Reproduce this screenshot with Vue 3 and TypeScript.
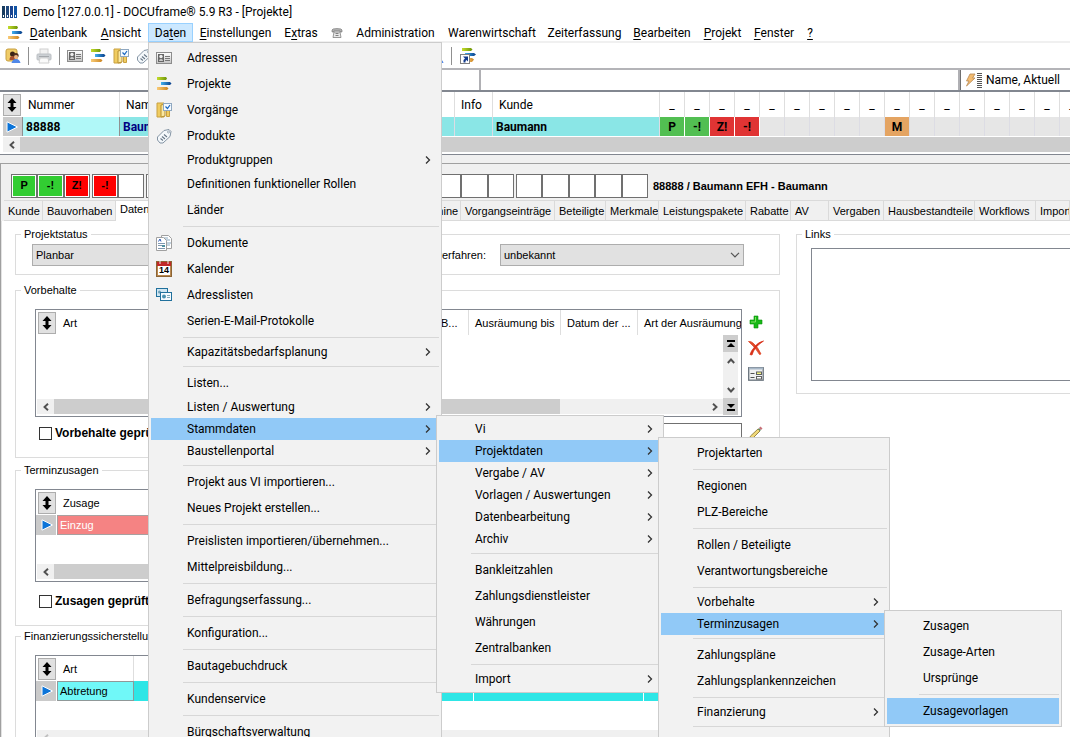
<script setup lang="ts">
import { ref } from 'vue'

interface Entry {
  label?: string
  icon?: string
  sub?: boolean
  open?: boolean
  sep?: boolean
}

const sep: Entry = { sep: true }

const menus: { name: string; items: Entry[] }[] = [
  {
    name: 'daten',
    items: [
      { label: 'Adressen', icon: 'card' },
      { label: 'Projekte', icon: 'bars' },
      { label: 'Vorgänge', icon: 'folder' },
      { label: 'Produkte', icon: 'tag' },
      { label: 'Produktgruppen', sub: true },
      { label: 'Definitionen funktioneller Rollen' },
      { label: 'Länder' },
      sep,
      { label: 'Dokumente', icon: 'docs' },
      { label: 'Kalender', icon: 'calendar' },
      { label: 'Adresslisten', icon: 'cards' },
      { label: 'Serien-E-Mail-Protokolle' },
      sep,
      { label: 'Kapazitätsbedarfsplanung', sub: true },
      sep,
      { label: 'Listen...' },
      { label: 'Listen / Auswertung', sub: true },
      { label: 'Stammdaten', sub: true, open: true },
      { label: 'Baustellenportal', sub: true },
      sep,
      { label: 'Projekt aus VI importieren...' },
      { label: 'Neues Projekt erstellen...' },
      sep,
      { label: 'Preislisten importieren/übernehmen...' },
      { label: 'Mittelpreisbildung...' },
      sep,
      { label: 'Befragungserfassung...' },
      sep,
      { label: 'Konfiguration...' },
      sep,
      { label: 'Bautagebuchdruck' },
      sep,
      { label: 'Kundenservice' },
      sep,
      { label: 'Bürgschaftsverwaltung' },
    ],
  },
  {
    name: 'stammdaten',
    items: [
      { label: 'Vi', sub: true },
      { label: 'Projektdaten', sub: true, open: true },
      { label: 'Vergabe / AV', sub: true },
      { label: 'Vorlagen / Auswertungen', sub: true },
      { label: 'Datenbearbeitung', sub: true },
      { label: 'Archiv', sub: true },
      sep,
      { label: 'Bankleitzahlen' },
      { label: 'Zahlungsdienstleister' },
      { label: 'Währungen' },
      { label: 'Zentralbanken' },
      sep,
      { label: 'Import', sub: true },
    ],
  },
  {
    name: 'projektdaten',
    items: [
      { label: 'Projektarten' },
      sep,
      { label: 'Regionen' },
      { label: 'PLZ-Bereiche' },
      sep,
      { label: 'Rollen / Beteiligte' },
      { label: 'Verantwortungsbereiche' },
      sep,
      { label: 'Vorbehalte', sub: true },
      { label: 'Terminzusagen', sub: true, open: true },
      sep,
      { label: 'Zahlungspläne' },
      { label: 'Zahlungsplankennzeichen' },
      sep,
      { label: 'Finanzierung', sub: true },
      sep,
    ],
  },
  {
    name: 'terminzusagen',
    items: [
      { label: 'Zusagen' },
      { label: 'Zusage-Arten' },
      { label: 'Ursprünge' },
      sep,
      { label: 'Zusagevorlagen', open: true },
    ],
  },
]

// [before, accelerator, after]
const menubar: [string, string, string][] = [
  ['', 'D', 'atenbank'],
  ['', 'A', 'nsicht'],
  ['Da', 't', 'en'],
  ['', 'E', 'instellungen'],
  ['E', 'x', 'tras'],
  ['', '', ''],
  ['Administration', '', ''],
  ['Warenwirtschaft', '', ''],
  ['Zeiterfassung', '', ''],
  ['', 'B', 'earbeiten'],
  ['', 'P', 'rojekt'],
  ['', 'F', 'enster'],
  ['', '?', ''],
]

const flags: { text?: string; tone?: string }[] = [
  { text: 'P', tone: 'green' },
  { text: '-!', tone: 'green' },
  { text: 'Z!', tone: 'red' },
  { text: '-!', tone: 'red' },
  {}, {}, {}, {}, {},
  { text: 'M', tone: 'orange' },
  {}, {}, {}, {}, {}, {}, {},
]

const statusGroups: { size: string; boxes: { text?: string; tone?: string }[] }[] = [
  { size: 'g3', boxes: [{ text: 'P', tone: 'lime' }, { text: '-!', tone: 'lime' }, { text: 'Z!', tone: 'pure' }] },
  { size: 'g2', boxes: [{ text: '-!', tone: 'pure' }, {}] },
  { size: 'g14', boxes: Array.from({ length: 14 }, () => ({})) },
  { size: 'g5', boxes: Array.from({ length: 5 }, () => ({})) },
]

const tabs = ['Kunde', 'Bauvorhaben', 'Daten', 'Termine', 'Vorgangseinträge', 'Beteiligte', 'Merkmale', 'Leistungspakete', 'Rabatte', 'AV', 'Vergaben', 'Hausbestandteile', 'Workflows', 'Import']

const status = ref('Planbar')
const procedure = ref('unbekannt')
</script>

<template>
  <div class="app">
    <svg class="defs" aria-hidden="true">
      <defs>
        <linearGradient id="g-green" x1="0" x2="1"><stop offset="0" stop-color="#c4dc2c" /><stop offset="1" stop-color="#6c9408" /></linearGradient>
        <linearGradient id="g-blue" x1="0" x2="1"><stop offset="0" stop-color="#40b0f0" /><stop offset="1" stop-color="#083c88" /></linearGradient>
        <linearGradient id="g-orange" x1="0" x2="1"><stop offset="0" stop-color="#f8cc78" /><stop offset="1" stop-color="#cc8420" /></linearGradient>
        <linearGradient id="g-gray" x1="0" y1="0" x2="0" y2="1"><stop offset="0" stop-color="#ffffff" /><stop offset="1" stop-color="#c4c4c4" /></linearGradient>
      </defs>
      <symbol id="i-bars" viewBox="0 0 16 16">
        <path d="M1 1h9l1 1.500-1 1.500H1z" fill="url(#g-green)" />
        <path d="M5 6h9l1.500 1.500L14 9H5z" fill="url(#g-blue)" />
        <path d="M1 11h10l1.500 1.500L11 14H1z" fill="url(#g-orange)" />
      </symbol>
      <symbol id="i-card" viewBox="0 0 16 16">
        <rect x=".5" y="2.500" width="15" height="11" fill="url(#g-gray)" stroke="#8c8c8c" />
        <rect x="2" y="4" width="6" height="8" fill="#666" />
        <circle cx="5" cy="6.500" r="1.700" fill="#eee" /><path d="M3 11q0-2 2-2t2 2z" fill="#ccc" />
        <path d="M9 6.500h5M9 8.500h5M9 10.500h5" stroke="#777" />
      </symbol>
      <symbol id="i-folder" viewBox="0 0 16 16">
        <path d="M1 1h7v14H1z" fill="#f0cc60" stroke="#c8a040" />
        <path d="M5 3l4-1v12l-4 1z" fill="#fbe8a0" stroke="#b89030" />
        <path d="M10.500 8v6.500h3V8z" fill="#f0cc60" stroke="#c8a040" />
        <rect x="7.500" y="1.500" width="8" height="7" fill="#f4faff" stroke="#90a8c0" />
        <path d="M9.500 4.500l2 2 2.500-3.500" fill="none" stroke="#1c68c0" stroke-width="1.200" />
      </symbol>
      <symbol id="i-tag" viewBox="0 0 16 16">
        <path d="M1.500 9L8 2.500l5-1 2 2-1 5L7 15H4l-2.500-3z" fill="#f4f8fb" stroke="#8494a4" />
        <circle cx="12.500" cy="4" r="1" fill="#fff" stroke="#8494a4" stroke-width=".8" />
        <path d="M4.500 10.500l2.500 2M6 8.500l3 2.500M8 6.500l3 2.500" stroke="#667686" stroke-width="1.100" />
      </symbol>
      <symbol id="i-docs" viewBox="0 0 16 16">
        <path d="M5.500.5h7l3 3v10h-10z" fill="#fff" stroke="#a0a0a0" />
        <path d="M8 3h4M8 5h6M11 8h4M11 10h3" stroke="#88a8c0" />
        <path d="M.5 2.500h7l3 3v10H.5z" fill="#fff" stroke="#a0a0a0" />
        <path d="M2.500 6.500L4 4l1 2.500" stroke="#2858b8" fill="none" />
        <path d="M2 8.500h7M2 10.500h4M2 13.500h7" stroke="#8098b0" /><path d="M6 10h3v2H6z" fill="#5090a0" />
      </symbol>
      <symbol id="i-calendar" viewBox="0 0 16 16">
        <rect x=".5" y=".5" width="15" height="15" fill="#b88850" stroke="#8c6434" />
        <rect x="2" y="4" width="12" height="10" fill="#fff" />
        <rect x="1" y="1" width="14" height="4" fill="#c02828" />
        <path d="M4 0v3M12 0v3" stroke="#eee" />
      </symbol>
      <symbol id="i-cards" viewBox="0 0 16 16">
        <rect x=".5" y="1.500" width="11" height="8" fill="#cfe6f2" stroke="#20709c" />
        <circle cx="3.500" cy="5" r="1.500" fill="#70a0b8" />
        <rect x="4.500" y="5.500" width="11" height="8" fill="#f4faff" stroke="#20709c" />
        <circle cx="8" cy="9.500" r="2" fill="#4890b0" /><path d="M11 8.500h3M11 10.500h3" stroke="#80a8b8" />
      </symbol>
      <symbol id="i-users" viewBox="0 0 16 16">
        <rect x="1" y="1" width="11" height="12" rx="2" fill="#f0cc68" stroke="#c8a040" />
        <circle cx="7.500" cy="6" r="2.500" fill="#3c2418" /><path d="M4.500 12q0-4 3-4t3 4z" fill="#a85030" />
        <circle cx="11" cy="7.500" r="2.600" fill="#503020" /><circle cx="11" cy="9" r="2" fill="#f0b888" />
        <path d="M6.500 15q1-4 4.500-4t4.500 4z" fill="#5088e8" />
      </symbol>
      <symbol id="i-printer" viewBox="0 0 16 16">
        <rect x="4" y="1" width="8" height="6" fill="#f2f2f2" stroke="#d0d0d0" />
        <rect x="1" y="6" width="14" height="6" rx="1" fill="#ccd0d4" stroke="#bcc0c4" />
        <path d="M3 8.500h10" stroke="#a4a8ac" />
        <path d="M4 10h8l1 5H3z" fill="#fafafa" stroke="#d0d0d0" />
      </symbol>
      <symbol id="i-shortcut" viewBox="0 0 18 18">
        <path d="M3 1h9l1.500 1.500L12 4H3z" fill="url(#g-green)" />
        <path d="M6 6h9l2 1.500L15 9H6z" fill="url(#g-blue)" />
        <path d="M7 11h6l2 1.500-2 2.500H7z" fill="url(#g-orange)" />
        <rect x="1.500" y="7.500" width="9" height="9" fill="#fff" stroke="#808080" />
        <path d="M4 9.500h5v5L7.500 13l-1 1v1.500H4.500V13L6 11.500z" fill="#143c8c" />
      </symbol>
      <symbol id="i-phone" viewBox="0 0 12 12">
        <path d="M1 5V3q0-1.500 5-1.500T11 3v2H9V4H3v1z" fill="#b0b0b0" stroke="#707070" stroke-width=".6" />
        <path d="M3 5h6l1 5.500H2z" fill="#e8e8e8" stroke="#808080" stroke-width=".8" />
        <path d="M4.500 6.500h3M4.500 8.500h3" stroke="#808080" />
      </symbol>
      <symbol id="i-logo" viewBox="0 0 16 12">
        <path d="M0 0h3v12H0z" fill="#183c60" /><path d="M4 0h3v12H4z" fill="#20487c" /><path d="M8 0h3v12H8z" fill="#184490" /><path d="M12 0h3v12h-3z" fill="#1054a4" />
        <path d="M1 9h1v2H1zM5 9h1v2H5zM9 9h1v2H9zM13 9h1v2h-1z" fill="#fff" />
      </symbol>
      <symbol id="i-flash" viewBox="0 0 18 16">
        <path d="M5 2h5L7.500 6H10L1.500 14l2.500-5H1.500z" fill="#f4bc70" stroke="#b88850" stroke-width=".8" />
        <path d="M12 1.500h5M12 3.500h5M12 5.500h5M12 7.500h5M12 9.500h5M12 11.500h5M12 13.500h5M12 15.500h5" stroke="#555" />
      </symbol>
      <symbol id="i-sort" viewBox="0 0 10 14">
        <path d="M5 0l4.500 5h-3v4h3L5 14 .5 9h3V5h-3z" fill="#000" />
      </symbol>
      <symbol id="i-play" viewBox="0 0 12 12">
        <path d="M1 .8L11.500 6 1 11.200z" fill="#0c74d8" stroke="#fff" />
      </symbol>
      <symbol id="i-plus" viewBox="0 0 16 16">
        <path d="M6 2h4v4h4v4h-4v4H6v-4H2V6h4z" fill="#18b818" stroke="#089008" stroke-width=".6" /><path d="M7.500 3v5H3" stroke="#80e060" fill="none" />
      </symbol>
      <symbol id="i-cross" viewBox="0 0 16 16">
        <path d="M.5 1.500Q3 1 5 3q5 4 8 11l-1.500.5Q8 8 .5 1.500z" fill="#e04828" stroke="#e04828" stroke-width=".8" />
        <path d="M15.500 1Q10 2 6.500 7 3 11 2 14.500l2 .5Q6 7 15.500 1z" fill="#d83018" stroke="#d83018" stroke-width=".8" />
      </symbol>
      <symbol id="i-form" viewBox="0 0 16 16">
        <rect x=".7" y="1.700" width="14.500" height="12.500" fill="#f0f0f0" stroke="#68727c" stroke-width="1.300" />
        <path d="M1 2.500h14" stroke="#a8b8c8" stroke-width="2" />
        <path d="M2.500 7.500h4M2.500 11.500h4" stroke="#505050" />
        <rect x="8.500" y="6" width="5" height="2.500" fill="#f4f480" stroke="#606060" /><rect x="8.500" y="10.500" width="5" height="2.500" fill="#fff" stroke="#606060" />
      </symbol>
      <symbol id="i-pencil" viewBox="0 0 16 16">
        <path d="M1 15l1.500-4L10 4l2 2-7.500 7.500z" fill="#f0d878" stroke="#9c8848" />
        <path d="M10 4l1-1 2 2-1 1z" fill="#609068" /><path d="M11 3l1.500-1.500 2 2L13 5z" fill="#c87078" />
      </symbol>
      <symbol id="i-right" viewBox="0 0 8 10"><path d="M2 1.500L5.500 5 2 8.500" fill="none" stroke="currentColor" stroke-width="1.300" /></symbol>
      <symbol id="i-sleft" viewBox="0 0 8 8"><path d="M6 .8L2.500 4 6 7.200" fill="none" stroke="currentColor" stroke-width="1.900" /></symbol>
      <symbol id="i-sright" viewBox="0 0 8 8"><path d="M2 .8L5.500 4 2 7.200" fill="none" stroke="currentColor" stroke-width="1.900" /></symbol>
      <symbol id="i-sup" viewBox="0 0 8 8"><path d="M.8 6L4 2.500 7.200 6" fill="none" stroke="currentColor" stroke-width="1.900" /></symbol>
      <symbol id="i-sdown" viewBox="0 0 8 8"><path d="M.8 2L4 5.500 7.200 2" fill="none" stroke="currentColor" stroke-width="1.900" /></symbol>
      <symbol id="i-top" viewBox="0 0 8 8"><path d="M0 0h8v2H0zM4 3l4 4H0z" /></symbol>
      <symbol id="i-bottom" viewBox="0 0 8 8"><path d="M0 6h8v2H0zM4 5L0 1h8z" /></symbol>
      <symbol id="i-drop" viewBox="0 0 10 6"><path d="M1 .8l4 4 4-4" fill="none" stroke="#555" stroke-width="1.200" /></symbol>
    </svg>

    <header class="titlebar">
      <svg class="logo"><use href="#i-logo" /></svg>
      <span>Demo [127.0.0.1] - DOCUframe® 5.9 R3 - [Projekte]</span>
    </header>

    <nav class="menubar" aria-label="Menü">
      <svg class="ico16"><use href="#i-bars" /></svg>
      <button v-for="(m, i) in menubar" :key="i" type="button" :class="{ on: i === 2 }" :aria-label="m[0] + m[1] + m[2] || 'Telefon'">
        <svg v-if="i === 5" class="ico12"><use href="#i-phone" /></svg>
        <template v-else>{{ m[0] }}<u>{{ m[1] }}</u>{{ m[2] }}</template>
      </button>
    </nav>

    <div class="toolbar">
      <button type="button" aria-label="Benutzer"><svg class="ico16"><use href="#i-users" /></svg></button>
      <i class="split"></i>
      <button type="button" aria-label="Drucken"><svg class="ico16"><use href="#i-printer" /></svg></button>
      <i class="split"></i>
      <button type="button" aria-label="Adressen"><svg class="ico16"><use href="#i-card" /></svg></button>
      <button type="button" aria-label="Projekte"><svg class="ico16"><use href="#i-bars" /></svg></button>
      <button type="button" aria-label="Vorgänge"><svg class="ico16"><use href="#i-folder" /></svg></button>
      <button type="button" aria-label="Produkte"><svg class="ico16"><use href="#i-tag" /></svg></button>
      <span class="covered"></span>
      <button type="button" aria-label="Mitarbeiter"><svg class="ico16"><use href="#i-users" /></svg></button>
      <i class="split"></i>
      <button type="button" aria-label="Verknüpfung"><svg class="ico18"><use href="#i-shortcut" /></svg></button>
    </div>

    <div class="filters">
      <input type="text" aria-label="Filter 1" />
      <input type="text" aria-label="Filter 2" />
      <button type="button"><svg class="flash"><use href="#i-flash" /></svg>Name, Aktuell</button>
    </div>

    <section class="overview">
      <table>
        <colgroup>
          <col class="c-mark" /><col class="c-num" /><col class="c-name" /><col class="c-info" /><col class="c-kunde" />
          <col v-for="(f, i) in flags" :key="i" class="c-flag" />
        </colgroup>
        <thead>
          <tr>
            <th><button type="button" class="sorter" aria-label="Sortieren"><svg class="sort"><use href="#i-sort" /></svg></button></th>
            <th>Nummer</th>
            <th>Name</th>
            <th>Info</th>
            <th>Kunde</th>
            <th v-for="(f, i) in flags" :key="i" class="flag-h">_</th>
          </tr>
        </thead>
        <tbody>
          <tr>
            <td class="marker"><svg class="play"><use href="#i-play" /></svg></td>
            <td class="num">88888</td>
            <td class="name">Baumann</td>
            <td class="teal"></td>
            <td class="teal">Baumann</td>
            <td v-for="(f, i) in flags" :key="i" class="flag" :class="f.tone">{{ f.text }}</td>
          </tr>
        </tbody>
      </table>
      <div class="hscroll full"><span class="arrow"><svg><use href="#i-sleft" /></svg></span><span class="thumb"></span></div>
    </section>

    <main class="detail">
      <div class="status-row">
        <div v-for="g in statusGroups" :key="g.size" class="status-group" :class="g.size">
          <span v-for="(b, i) in g.boxes" :key="i" class="box" :class="b.tone">{{ b.text }}</span>
        </div>
        <strong>88888 / Baumann EFH - Baumann</strong>
      </div>

      <div class="tabs" role="tablist">
        <button v-for="t in tabs" :key="t" type="button" role="tab" :aria-selected="t === 'Daten'" :class="{ sel: t === 'Daten' }">{{ t }}</button>
      </div>

      <div class="panel">
        <div class="col-left">
          <fieldset class="fs-status">
            <legend>Projektstatus</legend>
            <div class="picker grow">
              <select v-model="status" aria-label="Projektstatus"><option>Planbar</option></select>
              <svg><use href="#i-drop" /></svg>
            </div>
            <label for="proc">Vergabeverfahren:</label>
            <div class="picker fixed">
              <select id="proc" v-model="procedure"><option>unbekannt</option></select>
              <svg><use href="#i-drop" /></svg>
            </div>
          </fieldset>

          <fieldset class="fs-grid">
            <legend>Vorbehalte</legend>
            <div class="line">
              <div class="grid-box vorbehalte">
                <table>
                  <colgroup><col class="w21" /><col /><col class="w34" /><col class="w92" /><col class="w77" /><col class="w103" /></colgroup>
                  <thead>
                    <tr>
                      <th><button type="button" class="sorter" aria-label="Sortieren"><svg class="sort"><use href="#i-sort" /></svg></button></th>
                      <th>Art</th><th>B...</th><th>Ausräumung bis</th><th>Datum der ...</th><th>Art der Ausräumung</th>
                    </tr>
                  </thead>
                </table>
                <div class="scroll-area">
                  <div class="hwrap">
                    <div class="hscroll"><span class="arrow"><svg><use href="#i-sleft" /></svg></span><span class="thumb part"></span><span class="track"></span><span class="arrow"><svg><use href="#i-sright" /></svg></span></div>
                  </div>
                  <div class="vscroll">
                    <span class="jump"><svg><use href="#i-top" /></svg></span>
                    <span class="arrow"><svg><use href="#i-sup" /></svg></span>
                    <span class="track"></span>
                    <span class="arrow"><svg><use href="#i-sdown" /></svg></span>
                    <span class="jump"><svg><use href="#i-bottom" /></svg></span>
                  </div>
                </div>
              </div>
              <div class="actions">
                <button type="button" aria-label="Hinzufügen"><svg class="ico16"><use href="#i-plus" /></svg></button>
                <button type="button" aria-label="Löschen"><svg class="ico16"><use href="#i-cross" /></svg></button>
                <button type="button" aria-label="Formular"><svg class="ico16"><use href="#i-form" /></svg></button>
              </div>
            </div>
            <div class="line check-line">
              <label class="check"><input type="checkbox" />Vorbehalte geprüft</label>
              <input type="text" class="note" aria-label="Bemerkung" />
              <button type="button" aria-label="Bearbeiten"><svg class="ico16"><use href="#i-pencil" /></svg></button>
            </div>
          </fieldset>

          <fieldset class="fs-grid second">
            <legend>Terminzusagen</legend>
            <div class="line">
              <div class="grid-box zusagen">
                <table>
                  <colgroup><col class="w21" /><col /></colgroup>
                  <thead>
                    <tr><th><button type="button" class="sorter" aria-label="Sortieren"><svg class="sort"><use href="#i-sort" /></svg></button></th><th>Zusage</th></tr>
                  </thead>
                  <tbody>
                    <tr><td class="marker"><svg class="play"><use href="#i-play" /></svg></td><td class="salmon">Einzug</td></tr>
                  </tbody>
                </table>
                <div class="scroll-area">
                  <div class="hwrap"><div class="hscroll"><span class="arrow"><svg><use href="#i-sleft" /></svg></span><span class="thumb"></span></div></div>
                </div>
              </div>
            </div>
            <div class="line check-line late">
              <label class="check"><input type="checkbox" />Zusagen geprüft</label>
            </div>
          </fieldset>

          <fieldset class="fs-grid third">
            <legend>Finanzierungssicherstellung</legend>
            <div class="line">
              <div class="grid-box sicherung">
                <table>
                  <colgroup><col class="w21" /><col class="w77" /><col class="w340" /><col class="w170" /><col /></colgroup>
                  <thead>
                    <tr><th><button type="button" class="sorter" aria-label="Sortieren"><svg class="sort"><use href="#i-sort" /></svg></button></th><th>Art</th><th></th><th></th><th></th></tr>
                  </thead>
                  <tbody>
                    <tr><td class="marker"><svg class="play"><use href="#i-play" /></svg></td><td class="aqua">Abtretung</td><td class="cyan"></td><td class="cyan"></td><td class="cyan"></td></tr>
                  </tbody>
                </table>
                <div class="scroll-area">
                  <div class="hwrap"><div class="hscroll off"><span class="arrow"><svg><use href="#i-sleft" /></svg></span></div></div>
                </div>
              </div>
            </div>
          </fieldset>
        </div>

        <fieldset class="fs-links">
          <legend>Links</legend>
          <div class="links-box"></div>
        </fieldset>
      </div>
    </main>

    <ul v-for="m in menus" :key="m.name" class="menu" :class="m.name" role="menu">
      <li v-for="(e, i) in m.items" :key="i" :class="{ rule: e.sep }" role="none">
        <button v-if="!e.sep" type="button" role="menuitem" :class="{ sub: e.sub, open: e.open }">
          <span class="gutter">
            <svg v-if="e.icon" class="ico16"><use :href="'#i-' + e.icon" /></svg>
            <span v-if="e.icon === 'calendar'" class="day">14</span>
          </span>
          <span class="text">{{ e.label }}</span>
          <svg v-if="e.sub" class="chev"><use href="#i-right" /></svg>
        </button>
      </li>
    </ul>
  </div>
</template>

<style>
body {
  margin: 0;
  overflow: hidden;
}
</style>

<style scoped>
.app {
  position: relative;
  display: flex;
  flex-direction: column;
  height: 100vh;
  overflow: hidden;
  background: #fff;
  color: #000;
  font: 12px/16px Roboto, "Open Sans", sans-serif;
}
.app * { box-sizing: border-box; }
.defs { position: absolute; width: 0; height: 0; }
button {
  margin: 0;
  padding: 0;
  border: 0;
  background: none;
  color: inherit;
  font: inherit;
}
svg { display: block; flex: none; }
.ico12 { width: 12px; height: 12px; }
.ico16 { width: 16px; height: 16px; }
.ico18 { width: 18px; height: 18px; }

.titlebar {
  display: flex;
  flex: none;
  align-items: center;
  gap: 5px;
  height: 23px;
  padding-left: 2px;
}
.logo { width: 16px; height: 12px; }

.menubar {
  display: grid;
  flex: none;
  grid-template-columns: 16px 71px 54px 45px 85px 46px 25px 93px 100px 85px 70px 51px 52px 20px;
  align-items: center;
  height: 20px;
  padding-left: 7px;
  border-bottom: 2px solid #f0f0f0;
}
.menubar button {
  display: flex;
  align-items: center;
  justify-content: center;
  height: 19px;
  white-space: nowrap;
}
.menubar u { text-underline-offset: 2px; }
.menubar button.on { background: #cce8ff; border: 1px solid #99d1ff; }

.toolbar {
  display: flex;
  flex: none;
  align-items: center;
  gap: 7px;
  height: 25px;
  padding-left: 5px;
}
.split { width: 1px; height: 18px; background: #909090; }
.covered { width: 262px; }

.filters {
  display: grid;
  flex: none;
  grid-template-columns: 481px 1fr 110px;
  height: 24px;
  border-top: 2px solid #b4b4b8;
  border-bottom: 2px solid #828790;
}
.filters input {
  min-width: 0;
  border: 0;
  border-right: 2px solid #b0b0b4;
  background: #fff;
}
.filters button {
  display: flex;
  align-items: center;
  gap: 3px;
  padding-left: 4px;
  border-left: 1px solid #707070;
  white-space: nowrap;
}
.flash { width: 18px; height: 16px; }

.overview {
  flex: none;
  overflow: hidden;
  padding-left: 3px;
  border-bottom: 1px solid #828790;
}
table { border-collapse: separate; border-spacing: 0; table-layout: fixed; }
th { font-weight: 400; text-align: left; white-space: nowrap; }
td, th { padding: 0; overflow: hidden; }
.overview table { width: 1082px; }
.overview th {
  height: 25px;
  padding-left: 6px;
  border-right: 1px solid #dedede;
}
.overview th:first-child { padding-left: 0; border: 0; }
.overview th.flag-h { padding: 0; text-align: center; }
.overview td {
  height: 19px;
  padding-left: 3px;
  border-right: 1px solid #dcdce4;
  font-weight: 700;
  white-space: nowrap;
}
.c-mark { width: 19px; }
.c-num { width: 98px; }
.c-name { width: 335px; }
.c-info { width: 38px; }
.c-kunde { width: 167px; }
.c-flag { width: 25px; }
.overview td.num { background: #b0f8f8; border: 1px solid #909090; border-width: 0 1px; }
.overview td.name { background: #8ae6e6; color: #000080; }
.overview td.teal { background: #8ae6e6; }
.overview td.flag { padding: 0; background: #e6e6e6; text-align: center; }
.overview td.green { background: #52bf52; border-color: #fff; }
.overview td.red { background: #e03434; border-color: #fff; }
.overview td.orange { background: #e4a462; }
.overview td.marker, td.marker { padding: 0 0 0 3px; border: 0; background: #cacaca; }
.grid-box td.marker { padding-left: 5px; }
.play { width: 12px; height: 12px; }
.sorter {
  display: flex;
  align-items: center;
  justify-content: center;
  width: 18px;
  height: 22px;
  border: 1px solid #adadad;
  background: #e1e1e1;
}
.sort { width: 10px; height: 14px; }

.hscroll { display: flex; height: 15px; background: #f0f0f0; color: #505050; }
.hscroll .arrow { display: flex; align-items: center; justify-content: center; width: 17px; }
.arrow svg { width: 8px; height: 8px; }
.hscroll .thumb { flex: 1; background: #cdcdcd; }
.hscroll .track { flex: 1; }
.hscroll .thumb.part { flex: none; width: 506px; }
.hscroll.full { margin: 1px 0 2px; }
.hscroll.off { color: #bfbfbf; }

.detail {
  display: flex;
  flex: 1;
  flex-direction: column;
  min-height: 0;
  margin-top: 8px;
  border-top: 1px solid #a0a0a0;
  border-left: 1px solid #a0a0a0;
  background: #f0f0f0;
  box-shadow: 0 -8px 0 #f0f0f0;
}
.status-row {
  display: flex;
  flex: none;
  align-items: center;
  gap: 2px;
  height: 36px;
  padding: 10px 0 2px 10px;
  font: 11px/14px "Liberation Sans", Arial, sans-serif;
}
.status-group { display: flex; height: 24px; }
.g3 { width: 79px; }
.g2 { width: 52px; }
.g14 { width: 368px; }
.g5 { width: 132px; }
.box {
  flex: 1;
  border: 1px solid #707070;
  background: #fff;
  font-weight: 700;
  line-height: 20px;
  text-align: center;
  box-shadow: inset 0 0 0 1px #fff;
}
.box.lime { background: #32cd32; }
.box.pure { background: #f00; }
.status-row strong { padding-left: 3px; white-space: nowrap; }

.tabs {
  display: grid;
  flex: none;
  grid-template-columns: 39px 73px 299px 46px 94px 51px 53px 87px 45px 38px 55px 91px 61px 1fr;
  height: 21px;
  padding-left: 3px;
  font: 11px/14px "Liberation Sans", Arial, sans-serif;
}
.tabs button {
  overflow: hidden;
  padding-left: 4px;
  border: 1px solid #dadada;
  border-left: 0;
  text-align: left;
  white-space: nowrap;
}
.tabs button.sel { padding-bottom: 4px; border-bottom: 0; background: #fff; }

.panel {
  display: flex;
  flex: 1;
  align-items: flex-start;
  gap: 16px;
  min-height: 0;
  padding: 6px 0 0 13px;
  border-left: 1px solid #e3e3e3;
  background: #fff;
  font: 11px/14px "Liberation Sans", Arial, sans-serif;
}
.col-left { flex: none; width: 765px; }
fieldset {
  min-width: 0;
  margin: 0;
  padding: 0;
  border: 1px solid #dcdcdc;
}
legend { height: 14px; margin-left: 5px; padding: 0 3px; }
.fs-status {
  display: flex;
  align-items: center;
  padding: 3px 35px 8px 0;
}
.fs-status label { padding: 0 14px 0 12px; }
.picker { position: relative; }
.picker.grow { flex: 1; margin-left: 16px; }
.picker.fixed { width: 244px; }
.picker select {
  display: block;
  width: 100%;
  height: 22px;
  padding: 0 3px;
  border: 1px solid #adadad;
  border-radius: 0;
  background: #e1e1e1;
  color: #000;
  font: inherit;
  appearance: none;
}
.picker svg { position: absolute; top: 8px; right: 4px; width: 10px; height: 6px; }

.fs-grid { margin-top: 8px; padding: 12px 15px 14px 0; }
.fs-grid.second { margin-top: 5px; }
.fs-grid.third { margin-top: 3px; }
.line { display: flex; gap: 6px; padding-left: 19px; }
.grid-box {
  display: flex;
  flex: 1;
  flex-direction: column;
  min-width: 0;
  border: 1px solid #828790;
  overflow: hidden;
}
.vorbehalte { height: 108px; }
.zusagen { height: 93px; }
.sicherung { height: 93px; }
.grid-box table { flex: none; width: 100%; }
.grid-box th { height: 25px; padding-left: 6px; border-right: 1px solid #dedede; }
.grid-box th:first-child { padding-left: 2px; border: 0; }
.grid-box th:last-child { border: 0; }
.grid-box td { height: 20px; padding-left: 2px; white-space: nowrap; border-right: 1px solid #fff; }
.grid-box td.salmon { background: #f58383; border: 1px solid #a8a0a0; color: #fff; }
.grid-box td.aqua { background: #70f8f8; border: 1px solid #909898; }
.grid-box td.cyan { background: #2ee6e6; }
.w21 { width: 21px; }
.w34 { width: 34px; }
.w77 { width: 77px; }
.w92 { width: 92px; }
.w103 { width: 103px; }
.w340 { width: 340px; }
.w170 { width: 170px; }
.scroll-area { display: flex; flex: 1; padding: 0 3px 1px 1px; }
.hwrap { display: flex; flex: 1; flex-direction: column; justify-content: flex-end; padding-bottom: 1px; }
.vscroll { display: flex; flex-direction: column; width: 15px; background: #f0f0f0; color: #505050; }
.vscroll span { display: flex; align-items: center; justify-content: center; height: 17px; }
.vscroll .jump { background: #cdcdcd; color: #000; }
.vscroll .jump svg { width: 8px; height: 8px; }
.vscroll .track { flex: 1; }
.actions { display: flex; flex-direction: column; gap: 10px; padding-top: 5px; }
.check-line { align-items: center; height: 20px; margin-top: 6px; }
.check-line.late { margin-top: 9px; }
.check {
  display: flex;
  align-items: center;
  gap: 3px;
  width: 200px;
  padding-left: 4px;
  font-size: 12px;
  font-weight: 700;
  white-space: nowrap;
}
.check input {
  width: 13px;
  height: 13px;
  margin: 0;
  border: 1px solid #333;
  background: #fff;
  appearance: none;
}
.note { flex: 1; height: 20px; padding: 0; border: 1px solid #707070; }
.fs-links { flex: 1; min-width: 300px; padding: 7px 0 12px; }
.links-box { height: 133px; margin-left: 14px; border: 1px solid #828790; }

.menu {
  position: absolute;
  margin: 0;
  padding: 2px;
  border: 1px solid #ccc;
  background: #f2f2f2;
  list-style: none;
}
.menu button {
  display: flex;
  align-items: center;
  width: 100%;
  height: 26px;
  padding-right: 7px;
  text-align: left;
  white-space: nowrap;
}
.menu button.sub { height: 22px; }
.menu button.open { background: #91c9f7; }
.gutter { position: relative; width: 36px; padding-left: 5px; }
.day {
  position: absolute;
  top: 4px;
  left: 5px;
  width: 16px;
  font: bold 9px/11px "Liberation Sans", Arial, sans-serif;
  text-align: center;
}
.text { flex: 1; }
.chev { width: 8px; height: 10px; color: #333; }
.rule { height: 7px; padding: 3px 0 0 32px; }
.rule::after { display: block; height: 1px; background: #d7d7d7; content: ""; }
.daten { top: 42px; left: 148px; width: 294px; }
.stammdaten { top: 415px; left: 436px; width: 228px; }
.projektdaten { top: 437px; left: 658px; bottom: -8px; width: 232px; }
.terminzusagen { top: 610px; left: 884px; width: 178px; }
</style>
